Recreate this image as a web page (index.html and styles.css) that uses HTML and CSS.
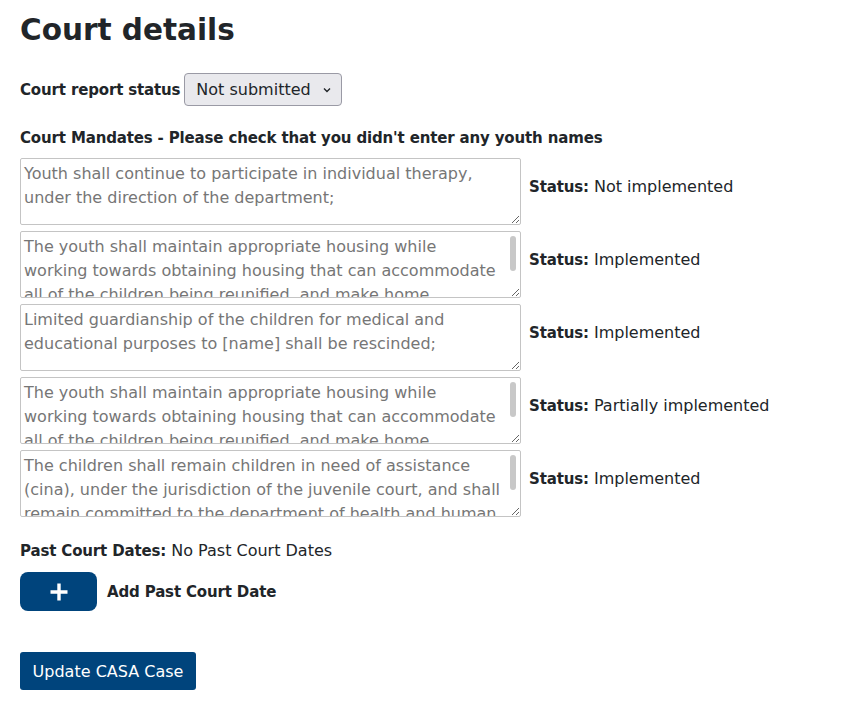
FILE: index.html
```html
<!DOCTYPE html>
<html>
<head>
<meta charset="utf-8">
<link rel="stylesheet" href="styles.css">
</head>
<body>
<main class="page">
  <h1 class="title">Court details</h1>
  <div class="report-row">
    <label class="bold-label" for="status">Court report status</label>
    <select id="status" class="select">
      <option>Not submitted</option>
    </select>
  </div>
  <h2 class="section-label">Court Mandates - Please check that you didn't enter any youth names</h2>
  <div class="mandates">
    <div class="mandate">
      <div class="field">
        <textarea class="mandate-text">Youth shall continue to participate in individual therapy, under the direction of the department;</textarea>
      </div>
      <div class="status"><b>Status:</b> Not implemented</div>
    </div>
    <div class="mandate">
      <div class="field">
        <textarea class="mandate-text">The youth shall maintain appropriate housing while
working towards obtaining housing that can accommodate
all of the children being reunified, and make home
visits available to the department.</textarea>
        <span class="thumb"></span>
      </div>
      <div class="status"><b>Status:</b> Implemented</div>
    </div>
    <div class="mandate">
      <div class="field">
        <textarea class="mandate-text">Limited guardianship of the children for medical and educational purposes to [name] shall be rescinded;</textarea>
      </div>
      <div class="status"><b>Status:</b> Implemented</div>
    </div>
    <div class="mandate">
      <div class="field">
        <textarea class="mandate-text">The youth shall maintain appropriate housing while
working towards obtaining housing that can accommodate
all of the children being reunified, and make home
visits available to the department.</textarea>
        <span class="thumb"></span>
      </div>
      <div class="status"><b>Status:</b> Partially implemented</div>
    </div>
    <div class="mandate">
      <div class="field">
        <textarea class="mandate-text">The children shall remain children in need of assistance
(cina), under the jurisdiction of the juvenile court, and shall
remain committed to the department of health and human
services for placement.</textarea>
        <span class="thumb"></span>
      </div>
      <div class="status"><b>Status:</b> Implemented</div>
    </div>
  </div>
  <p class="past-dates"><b class="bold-label">Past Court Dates:</b> No Past Court Dates</p>
  <div class="add-row">
    <button class="add-btn" type="button" aria-label="Add">
      <svg width="18" height="18" viewBox="0 0 18 18"><path d="M9 0.5v17M0.5 9h17" stroke="#fff" stroke-width="3.4" fill="none"/></svg>
    </button>
    <span class="add-label">Add Past Court Date</span>
  </div>
  <button class="update-btn" type="submit">Update CASA Case</button>
</main>
</body>
</html>
```
FILE: styles.css
```css
* { box-sizing: border-box; }
body {
  margin: 0;
  font-family: "DejaVu Sans", sans-serif;
  color: #212529;
  background: #fff;
  font-size: 16px;
}
.page { padding: 10px 20px 0 20px; }
.title {
  margin: 0;
  font-size: 29.5px;
  font-weight: 700;
  line-height: 40px;
}
.report-row {
  display: flex;
  align-items: center;
  gap: 4px;
  margin-top: 23px;
}
.bold-label, b, .add-label {
  font-weight: 700;
  font-size: 15px;
  letter-spacing: -0.15px;
}
.select {
  appearance: none;
  -webkit-appearance: none;
  height: 33px;
  width: 158px;
  font-family: inherit;
  font-size: 16px;
  color: #212529;
  background-color: #e9e9ed;
  background-image: url("data:image/svg+xml,%3Csvg xmlns='http://www.w3.org/2000/svg' width='8' height='6' viewBox='0 0 8 6'%3E%3Cpath d='M1 1.5l3 3 3-3' stroke='%23212529' stroke-width='1.4' fill='none'/%3E%3C/svg%3E");
  background-repeat: no-repeat;
  background-position: right 10px center;
  border: 1px solid #9a9aa5;
  border-radius: 4px;
  padding: 0 6px 0 11px;
}
.section-label {
  margin: 20px 0 0 0;
  font-size: 15px;
  letter-spacing: -0.15px;
  font-weight: 700;
  line-height: 24px;
}
.mandates {
  display: flex;
  flex-direction: column;
  gap: 6px;
  margin-top: 8px;
}
.mandate {
  display: flex;
  align-items: center;
  gap: 8px;
}
.field {
  position: relative;
  width: 501px;
  height: 67px;
}
.mandate-text {
  display: block;
  width: 501px;
  height: 67px;
  margin: 0;
  padding: 3px 14px 3px 3px;
  border: 1px solid #c4c4c4;
  border-radius: 2px;
  font-family: inherit;
  font-size: 16px;
  line-height: 24px;
  color: #767676;
  resize: vertical;
  overflow: hidden;
}
.thumb {
  position: absolute;
  right: 5px;
  top: 5px;
  width: 6px;
  height: 35px;
  border-radius: 3px;
  background: #c8c8c8;
}
.status {
  font-size: 16px;
  margin-bottom: 10px;
}
.past-dates {
  margin: 22px 0 0 0;
  line-height: 24px;
}
.add-row {
  display: flex;
  align-items: center;
  gap: 10px;
  margin-top: 9px;
}
.add-btn {
  width: 77px;
  height: 39px;
  border: 0;
  border-radius: 8px;
  background: #00447c;
  display: flex;
  align-items: center;
  justify-content: center;
}
.update-btn {
  margin-top: 41px;
  width: 176px;
  height: 38px;
  border: 0;
  border-radius: 3px;
  background: #00447c;
  color: #fff;
  font-family: inherit;
  font-size: 16px;
}
```
